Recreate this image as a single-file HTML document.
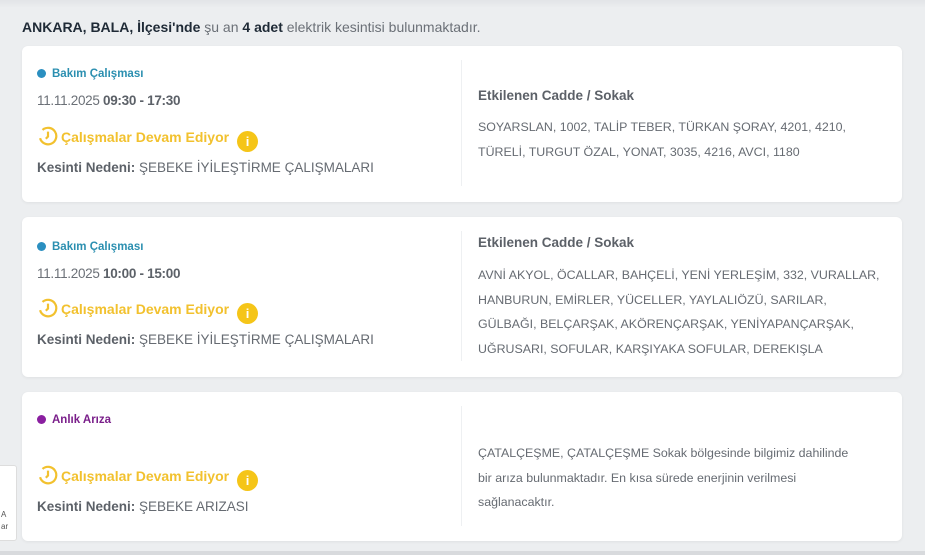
<!DOCTYPE html>
<html><head><meta charset="utf-8"><style>
*{margin:0;padding:0;box-sizing:border-box}
body{width:925px;height:555px;background:#eceef0;font-family:"Liberation Sans",sans-serif;color:#5c6168;position:relative;overflow:hidden}
.top{position:absolute;left:0;top:0;width:925px;height:8px;background:linear-gradient(#e2e4e7,#eceef0)}
.head{position:absolute;left:22px;top:19px;font-size:14px;color:#6b7077;white-space:nowrap}
.head b{color:#1f2a36}
.card{position:absolute;left:22px;width:880px;background:#fff;border-radius:6px;box-shadow:0 1px 3px rgba(0,0,0,.06)}
.div{position:absolute;left:439px;width:1px;background:#eef0f2}
.t{position:absolute;white-space:nowrap}
.badge{font-size:11.5px;font-weight:bold}
.badge i{display:inline-block;width:9px;height:9px;border-radius:50%;margin-right:6px;vertical-align:-1px}
.date{font-size:13.5px;color:#6b7077;letter-spacing:-.3px}
.date b{color:#5c6168}
.st{font-size:14px;font-weight:bold;color:#f2c12e}
.info{display:inline-block;width:21px;height:21px;border-radius:50%;background:#f5c518;color:#fff;font-size:13px;text-align:center;line-height:21px;margin-left:8px;vertical-align:-4px}
.kes{font-size:13.5px;color:#666b72}
.kes b{color:#5c6168}
.h{font-size:13.5px;font-weight:bold;color:#5c6168}
.tx{font-size:12.4px;color:#666b72;line-height:24.7px}
</style></head><body>
<div class="top"></div>
<div class="head"><b>ANKARA, BALA, İlçesi'nde</b> şu an <b>4 adet</b> elektrik kesintisi bulunmaktadır.</div>

<div class="card" style="top:46px;height:156px">
<div class="div" style="top:14px;height:126px"></div>
<div class="t badge" style="left:15px;top:22px;color:#2b8fb0"><i style="background:#2b8fc0"></i>Bakım Çalışması</div>
<div class="t date" style="left:15px;top:47px">11.11.2025 <b>09:30 - 17:30</b></div>
<div class="t st" style="left:15px;top:79px"><svg width="22" height="22" viewBox="0 0 20 20" style="vertical-align:-5px;margin-right:2px"><path d="M5 4.5A7.5 7.5 0 1 1 2.8 12" fill="none" stroke="#f2c12e" stroke-width="2"/><path d="M10 6v4.5l-2 2" fill="none" stroke="#f2c12e" stroke-width="2"/></svg>Çalışmalar Devam Ediyor<span class="info">i</span></div>
<div class="t kes" style="left:15px;top:114px"><b>Kesinti Nedeni:</b> ŞEBEKE İYİLEŞTİRME ÇALIŞMALARI</div>
<div class="t h" style="left:456px;top:42px">Etkilenen Cadde / Sokak</div>
<div class="t tx" style="left:456px;top:69px">SOYARSLAN, 1002, TALİP TEBER, TÜRKAN ŞORAY, 4201, 4210,<br>TÜRELİ, TURGUT ÖZAL, YONAT, 3035, 4216, AVCI, 1180</div>
</div>

<div class="card" style="top:217px;height:160px">
<div class="div" style="top:14px;height:130px"></div>
<div class="t badge" style="left:15px;top:24px;color:#2b8fb0"><i style="background:#2b8fc0"></i>Bakım Çalışması</div>
<div class="t date" style="left:15px;top:49px">11.11.2025 <b>10:00 - 15:00</b></div>
<div class="t st" style="left:15px;top:80px"><svg width="22" height="22" viewBox="0 0 20 20" style="vertical-align:-5px;margin-right:2px"><path d="M5 4.5A7.5 7.5 0 1 1 2.8 12" fill="none" stroke="#f2c12e" stroke-width="2"/><path d="M10 6v4.5l-2 2" fill="none" stroke="#f2c12e" stroke-width="2"/></svg>Çalışmalar Devam Ediyor<span class="info">i</span></div>
<div class="t kes" style="left:15px;top:115px"><b>Kesinti Nedeni:</b> ŞEBEKE İYİLEŞTİRME ÇALIŞMALARI</div>
<div class="t h" style="left:456px;top:18px">Etkilenen Cadde / Sokak</div>
<div class="t tx" style="left:456px;top:46px">AVNİ AKYOL, ÖCALLAR, BAHÇELİ, YENİ YERLEŞİM, 332, VURALLAR,<br>HANBURUN, EMİRLER, YÜCELLER, YAYLALIÖZÜ, SARILAR,<br>GÜLBAĞI, BELÇARŞAK, AKÖRENÇARŞAK, YENİYAPANÇARŞAK,<br>UĞRUSARI, SOFULAR, KARŞIYAKA SOFULAR, DEREKIŞLA</div>
</div>

<div class="card" style="top:392px;height:149px">
<div class="div" style="top:14px;height:120px"></div>
<div class="t badge" style="left:15px;top:22px;color:#7a1f8a"><i style="background:#8a1fa0"></i>Anlık Arıza</div>
<div class="t st" style="left:15px;top:72px"><svg width="22" height="22" viewBox="0 0 20 20" style="vertical-align:-5px;margin-right:2px"><path d="M5 4.5A7.5 7.5 0 1 1 2.8 12" fill="none" stroke="#f2c12e" stroke-width="2"/><path d="M10 6v4.5l-2 2" fill="none" stroke="#f2c12e" stroke-width="2"/></svg>Çalışmalar Devam Ediyor<span class="info">i</span></div>
<div class="t kes" style="left:15px;top:107px"><b>Kesinti Nedeni:</b> ŞEBEKE ARIZASI</div>
<div class="t tx" style="left:456px;top:49px">ÇATALÇEŞME, ÇATALÇEŞME Sokak bölgesinde bilgimiz dahilinde<br>bir arıza bulunmaktadır. En kısa sürede enerjinin verilmesi<br>sağlanacaktır.</div>
</div>

<div style="position:absolute;left:-4px;top:465px;width:21px;height:76px;background:#fff;border:1px solid #ddd;border-radius:3px;font-size:8px;color:#555;padding:43px 0 0 4px;line-height:12px">A<br>ar</div>
<div style="position:absolute;left:0;top:551px;width:925px;height:4px;background:#d8dadd"></div>
</body></html>
